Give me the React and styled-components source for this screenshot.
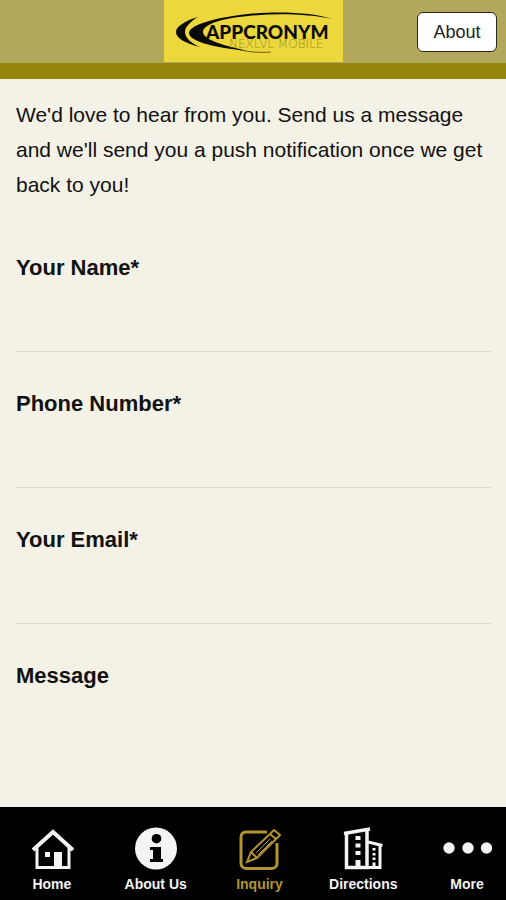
import React, { useState } from 'react'
import styled, { createGlobalStyle } from 'styled-components'

const GlobalStyle = createGlobalStyle`
  * {
    box-sizing: border-box;
  }

  body {
    margin: 0;
    background: #f4f2e6;
    color: #111;
    font-family: "Liberation Sans", Arial, sans-serif;
  }
`

const Page = styled.div`
  display: flex;
  flex-direction: column;
  height: 100vh;
`

const Header = styled.header`
  flex: none;
  display: grid;
  grid-template-columns: 1fr auto 1fr;
  align-items: center;
  background: #b2a85b;
  border-bottom: 16px solid #96840f;
`

const LogoLink = styled.a`
  grid-column: 2;
  display: block;
  height: 63px;

  svg {
    display: block;
  }
`

const AboutButton = styled.button`
  justify-self: end;
  width: 80px;
  height: 40px;
  margin-right: 9px;
  padding: 2px 0 0;
  border: 1px solid #2a2818;
  border-radius: 6px;
  background: #fff;
  color: #222;
  font-family: inherit;
  font-size: 18px;
  cursor: pointer;
`

const Form = styled.form`
  flex: 1;
  min-height: 0;
  display: flex;
  flex-direction: column;
  padding: 18px 15px 0 16px;
  overflow: hidden;
`

const Intro = styled.p`
  margin: 0 0 50px;
  font-size: 21px;
  line-height: 35px;
`

const Field = styled.div`
  flex: ${props => (props.$grow ? '1' : 'none')};
  display: flex;
  flex-direction: column;
  margin-bottom: ${props => (props.$grow ? '0' : '36px')};
`

const Label = styled.label`
  font-size: 22px;
  font-weight: bold;
  line-height: 32px;
`

const Input = styled.input`
  width: 100%;
  height: 68px;
  padding: 0;
  border: 0;
  border-bottom: 1px solid #dcdad0;
  background: transparent;
  color: inherit;
  font-family: inherit;
  font-size: 21px;
  outline: none;
`

const TextArea = styled.textarea`
  flex: 1;
  width: 100%;
  padding: 16px 0;
  border: 0;
  background: transparent;
  color: inherit;
  font-family: inherit;
  font-size: 21px;
  resize: none;
  outline: none;
`

const TabBar = styled.nav`
  flex: none;
  overflow: hidden;
  background: #000;
`

/* the strip is a bit wider than the screen, the last tab runs off its edge */
const TabList = styled.div`
  display: grid;
  grid-template-columns: repeat(5, 1fr);
  margin-right: -13px;
`

const Tab = styled.a`
  display: flex;
  flex-direction: column;
  align-items: center;
  height: 93px;
  padding-top: 19px;
  color: ${props => (props.$active ? '#b3942f' : '#f4f4f4')};
  font-size: 14px;
  font-weight: bold;
  line-height: 16px;
  text-decoration: none;

  svg {
    display: block;
    margin-bottom: 6px;
  }
`

const Logo = () => (
  <svg width="179" height="62" viewBox="0 0 179 62" role="img" aria-label="Appcronym">
    <rect width="179" height="62" fill="#ecd73d" />
    <path d="M168 19 C150 12 112 11 84 14 C46 18 25 26 25 33 C25 40 44 47 84 51 C62 46 39 40 39 32 C39 24 60 18 84 16 C112 13 146 14 168 19Z" fill="#0b0a02" />
    <path d="M34 17 C20 21 12 27 12 32 C12 38 20 43 36 47 C27 43 21 38 21 32 C21 27 27 21 34 17Z" fill="#0b0a02" />
    <path d="M76 50 C86 52 96 53 107 52" fill="none" stroke="#6d621b" strokeWidth="1" />
    <text x="42" y="39" fontFamily="Lato" fontWeight="900" fontSize="19" fill="#0b0a02">APPCRONYM</text>
    <text x="65" y="48" fontFamily="DejaVu Sans" fontWeight="200" fontSize="12" fill="#a08f24">NEXLVL MOBILE</text>
  </svg>
)

const HomeIcon = () => (
  <svg width="44" height="44" viewBox="0 0 44 44" fill="none" stroke="currentColor">
    <path d="M3 24 L23 6 L43 24" strokeWidth="4" />
    <path d="M7 21 V41.5 H39 V21" strokeWidth="3" />
    <rect x="15" y="26" width="5" height="5" fill="currentColor" stroke="none" />
    <rect x="24" y="26" width="8" height="15" fill="currentColor" stroke="none" />
  </svg>
)

const InfoIcon = () => (
  <svg width="44" height="44" viewBox="0 0 44 44">
    <circle cx="22" cy="22.5" r="21" fill="currentColor" />
    <circle cx="22.5" cy="12.7" r="4.8" fill="#000" />
    <path d="M16 21 H27 V33 H29 V36 H16 V33 H19 V24 H16Z" fill="#000" />
  </svg>
)

const InquiryIcon = () => (
  <svg width="44" height="44" viewBox="0 0 44 44" fill="none" stroke="currentColor" strokeWidth="2">
    <path d="M30 6 H9 C6 6 4 8 4 11 V37 C4 40 6 42.5 9 42.5 H35 C38 42.5 40 40 40 37 V17" strokeWidth="3" />
    <path d="M37 4 L43 9 L20 32 L10 36 L14 26Z" />
    <path d="M33 8 L39 13 M14 26 L20 32" />
    <path d="M33 13 L19 27 M35 15 L21 29" strokeWidth="1" />
  </svg>
)

const DirectionsIcon = () => (
  <svg width="44" height="44" viewBox="0 0 44 44" fill="none" stroke="currentColor" strokeWidth="3.5">
    <path d="M5.5 7 V41.5 H26 V3" />
    <path d="M3 7.5 L29 3" />
    <path d="M27 16 L41.5 19.5 M39 19 V41.5 H26" strokeWidth="3" />
    <path d="M17 10 V14 M17 17.5 V21.5 M17 25 V29 M17 34 V41" strokeWidth="5" />
    <path d="M33 22 V24.5 M33 27 V29.5 M33 31.5 V34 M33 36.5 V41" strokeWidth="3" />
  </svg>
)

const MoreIcon = () => (
  <svg width="50" height="44" viewBox="0 0 50 44" fill="currentColor">
    <circle cx="7" cy="22" r="5.7" />
    <circle cx="26" cy="22" r="5.7" />
    <circle cx="44.5" cy="22" r="5.7" />
  </svg>
)

const tabs = [
  { id: 'home', label: 'Home', Icon: HomeIcon },
  { id: 'about', label: 'About Us', Icon: InfoIcon },
  { id: 'inquiry', label: 'Inquiry', Icon: InquiryIcon },
  { id: 'directions', label: 'Directions', Icon: DirectionsIcon },
  { id: 'more', label: 'More', Icon: MoreIcon },
]

const fields = [
  { id: 'name', label: 'Your Name*', type: 'text' },
  { id: 'phone', label: 'Phone Number*', type: 'tel' },
  { id: 'email', label: 'Your Email*', type: 'email' },
]

const App = () => {
  const [active, setActive] = useState('inquiry')
  const [values, setValues] = useState({ name: '', phone: '', email: '', message: '' })

  const handleChange = e => {
    setValues({ ...values, [e.target.id]: e.target.value })
  }

  return (
    <Page>
      <GlobalStyle />
      <Header>
        <LogoLink href="#home"><Logo /></LogoLink>
        <AboutButton type="button" onClick={() => setActive('about')}>About</AboutButton>
      </Header>

      <Form onSubmit={e => e.preventDefault()}>
        <Intro>
          We'd love to hear from you. Send us a message and we'll send you a push notification once we get back to you!
        </Intro>
        {fields.map(field => (
          <Field key={field.id}>
            <Label htmlFor={field.id}>{field.label}</Label>
            <Input id={field.id} type={field.type} value={values[field.id]} onChange={handleChange} required />
          </Field>
        ))}
        <Field $grow>
          <Label htmlFor="message">Message</Label>
          <TextArea id="message" value={values.message} onChange={handleChange} />
        </Field>
      </Form>

      <TabBar>
        <TabList>
          {tabs.map(({ id, label, Icon }) => (
            <Tab key={id} href={'#' + id} $active={active === id} onClick={() => setActive(id)}>
              <Icon />
              {label}
            </Tab>
          ))}
        </TabList>
      </TabBar>
    </Page>
  )
}

export default App
